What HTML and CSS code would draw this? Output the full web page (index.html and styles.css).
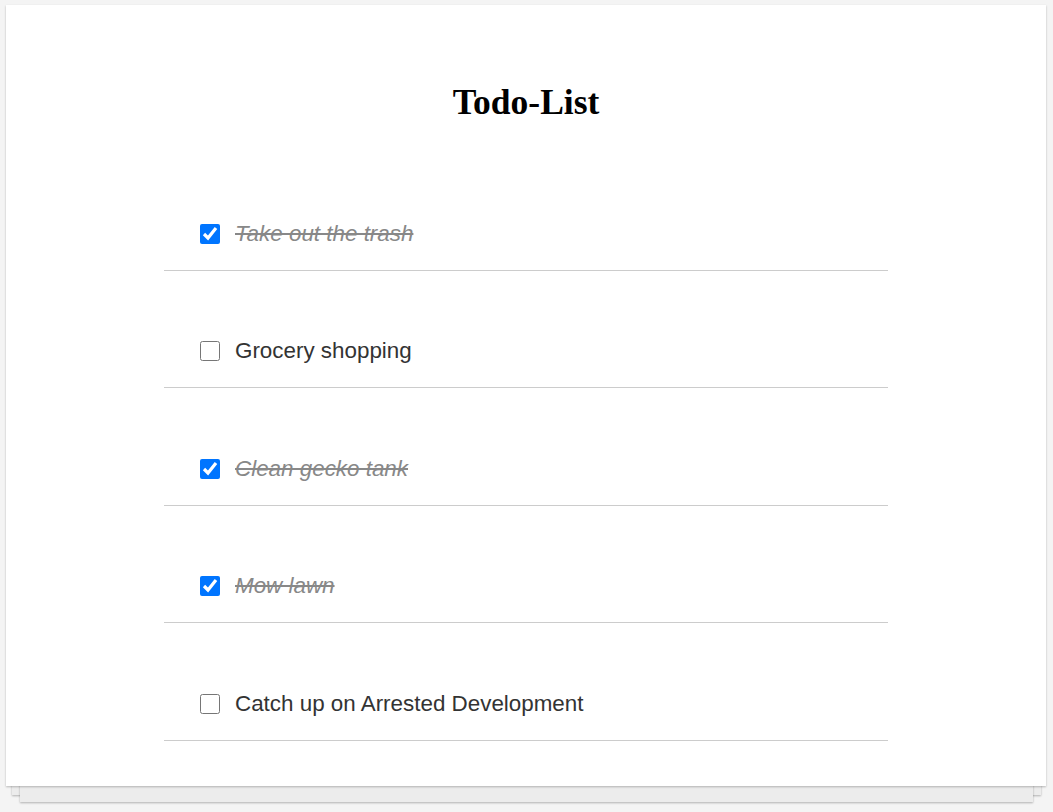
FILE: index.html
```html
<!DOCTYPE html>
<html>
<head>
<meta charset="utf-8">
<link rel="stylesheet" href="styles.css">
</head>
<body>
<div class="paper">
  <h1 class="title">Todo-List</h1>
  <ul class="todos">
    <li class="todo done"><input type="checkbox" checked><span>Take out the trash</span></li>
    <li class="todo"><input type="checkbox"><span>Grocery shopping</span></li>
    <li class="todo done"><input type="checkbox" checked><span>Clean gecko tank</span></li>
    <li class="todo done"><input type="checkbox" checked><span>Mow lawn</span></li>
    <li class="todo"><input type="checkbox"><span>Catch up on Arrested Development</span></li>
  </ul>
</div>
</body>
</html>
```
FILE: styles.css
```css
html {
  margin: 0;
  padding: 0;
  background: #f4f4f4;
}
body {
  margin: 0;
  padding: 5px 6px 0 6px;
  height: 812px;
  box-sizing: border-box;
  overflow: hidden;
  background: transparent;
}
.paper {
  position: relative;
  width: 1040px;
  height: 781px;
  background: #fff;
  box-shadow: 0 1px 2px rgba(0,0,0,0.25);
  padding-top: 1px;
  box-sizing: border-box;
}
.paper::before,
.paper::after {
  content: "";
  position: absolute;
  z-index: -1;
  background: #ececec;
  box-shadow: 0 1px 2px rgba(0,0,0,0.28);
}
.paper::before {
  left: 6px;
  right: 5px;
  bottom: -9px;
  height: 20px;
}
.paper::after {
  left: 14px;
  right: 13px;
  bottom: -16px;
  height: 20px;
}
.title {
  margin: 76px 0 0 0;
  font-family: "Liberation Serif", "Times New Roman", serif;
  font-weight: bold;
  font-size: 35.5px;
  line-height: 40px;
  text-align: center;
  color: #000;
}
.todos {
  list-style: none;
  margin: 31px auto 0 auto;
  padding: 0;
  width: 724px;
}
.todo {
  display: flex;
  align-items: center;
  padding: 68.5px 0 24px 36px;
  height: 24px;
  border-bottom: 1px solid #ccc;
  font-family: "Liberation Sans", Arial, sans-serif;
  font-size: 22.4px;
  color: #333;
}
.todo input {
  width: 20px;
  height: 20px;
  margin: 0 15px 0 0;
  flex: none;
}
.todo.done span {
  color: #888;
  font-style: italic;
  text-decoration: line-through;
}
```
